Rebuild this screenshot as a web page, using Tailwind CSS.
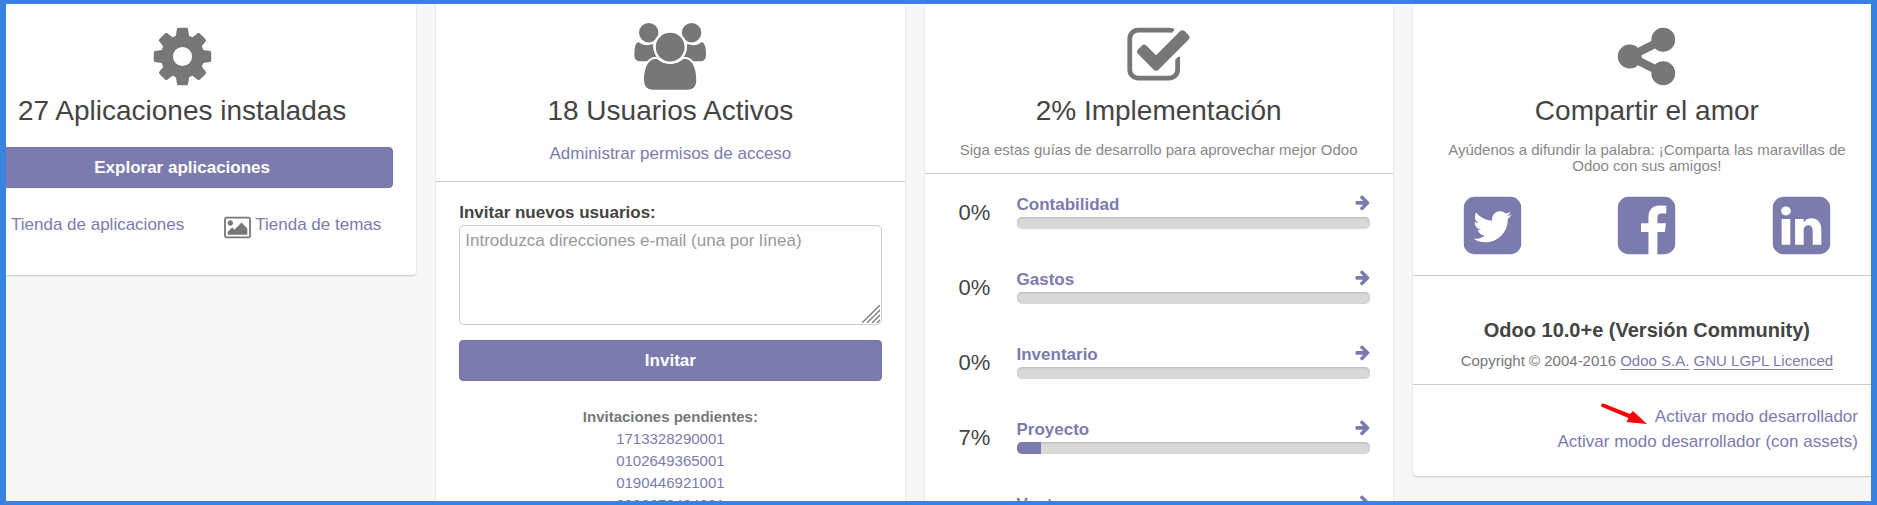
<!DOCTYPE html>
<html lang="es">
<head>
    <meta charset="UTF-8">
    <meta name="viewport" content="width=device-width, initial-scale=1.0">
    <title>Odoo - Configuración</title>
    <script src="https://cdn.jsdelivr.net/npm/@tailwindcss/browser@4"></script>
</head>
<body class="h-screen overflow-hidden border-x-6 border-y-4 border-[#3a82e0] bg-[#f7f7f7] font-['Liberation_Sans',Arial,sans-serif] text-[17px] text-[#444]">
    <main class="-ml-[58px] -mr-[10px] grid grid-cols-4 items-start gap-5">

        <!-- Apps -->
        <section class="rounded-b-sm bg-white px-[23px] pt-[19px] pb-[35px] text-center shadow-[0_1px_2px_rgba(0,0,0,0.2)]">
            <svg class="mx-auto size-[67px] fill-[#777]" viewBox="0 0 1792 1792"><path d="M1152 896q0-106-75-181t-181-75-181 75-75 181 75 181 181 75 181-75 75-181zm512-109v222q0 12-8 23t-20 13l-185 28q-19 54-39 91 35 50 107 138 10 12 10 25t-9 23q-27 37-99 108t-94 71q-12 0-26-9l-138-108q-44 23-91 38-16 136-29 186-7 28-36 28h-222q-14 0-24.5-8.5t-11.5-21.5l-28-184q-49-16-90-37l-141 107q-10 9-25 9-14 0-25-11-126-114-165-168-7-10-7-23 0-12 8-23 15-21 51-66.5t54-70.5q-27-50-41-99l-183-27q-13-2-21-12.5t-8-23.5v-222q0-12 8-23t19-13l186-28q14-46 39-92-40-57-107-138-10-12-10-24 0-10 9-23 26-36 98.5-107.5t94.5-71.5q13 0 26 10l138 107q44-23 91-38 16-136 29-186 7-28 36-28h222q14 0 24.5 8.5t11.5 21.5l28 184q49 16 90 37l142-107q9-9 24-9 13 0 25 10 129 119 165 170 7 8 7 22 0 12-8 23-15 21-51 66.5t-54 70.5q26 50 41 98l183 28q13 2 21 12.5t8 23.5z"/></svg>
            <h2 class="mt-[3px] text-[28px] leading-9">27 Aplicaciones instaladas</h2>
            <button class="mt-[18px] h-[41px] w-full rounded-sm border border-[#7574a8] bg-[#7c7bad] font-bold text-white">Explorar aplicaciones</button>
            <div class="mt-[25px] flex justify-between px-3 leading-6 text-[#7c7bad]">
                <a href="#" class="flex gap-1">
                    <svg class="mt-0.5 size-6 fill-[#777]" viewBox="0 0 24 24"><path d="M1 3h4l1 3h17l-2 9H8l.5 2H21v2H7L3.800 5H1z"/><circle cx="9" cy="21" r="2"/><circle cx="19" cy="21" r="2"/></svg>
                    Tienda de aplicaciones
                </a>
                <a href="#" class="flex gap-1">
                    <svg class="mt-0.5 h-[25px] w-[27px] fill-[#777]" viewBox="-64 0 1920 1792"><path d="M576 576q0 80-56 136t-136 56-136-56-56-136 56-136 136-56 136 56 56 136zm1024 384v448h-1408v-192l320-320 160 160 512-512zm96-704h-1600q-13 0-22.500 9.500t-9.500 22.500v1216q0 13 9.500 22.500t22.500 9.500h1600q13 0 22.500-9.500t9.500-22.500v-1216q0-13-9.500-22.500t-22.500-9.500zm160 32v1216q0 66-47 113t-113 47h-1600q-66 0-113-47t-47-113v-1216q0-66 47-113t113-47h1600q66 0 113 47t47 113z"/></svg>
                    Tienda de temas
                </a>
            </div>
        </section>

        <!-- Users -->
        <section class="rounded-b-sm bg-white pb-8 text-center shadow-[0_1px_2px_rgba(0,0,0,0.2)]">
            <div class="border-b border-[#ccc] px-[23px] pt-[19px] pb-[15px]">
                <svg class="mx-auto h-[67px] w-[72px] fill-[#777] stroke-white" viewBox="73 40 215 200">
                    <g stroke="none">
                        <path d="M86 97Q103 112 130 103Q133 142 150 145L132 154H92Q74 154 74 136Q74 100 86 97zM276 97Q259 112 232 103Q229 142 212 145L230 154H270Q288 154 288 136Q288 100 276 97z"/>
                        <circle cx="117" cy="69" r="29"/>
                        <circle cx="245" cy="69" r="29"/>
                    </g>
                    <path stroke-width="12" paint-order="stroke" d="M140 147Q181 178 222 147C250 147 259 180 259 212Q259 239 234 239H128Q103 239 103 212C103 180 112 147 140 147z"/>
                    <circle cx="181" cy="112" r="43" stroke-width="14" paint-order="stroke"/>
                </svg>
                <h2 class="mt-[3px] text-[28px] leading-9">18 Usuarios Activos</h2>
                <a href="#" class="mt-[13px] block leading-6 text-[#7c7bad]">Administrar permisos de acceso</a>
            </div>
            <form class="px-[23px] pt-[19px]">
                <label for="emails" class="block text-left leading-6 font-bold">Invitar nuevos usuarios:</label>
                <div class="relative">
                    <textarea id="emails" placeholder="Introduzca direcciones e-mail (una por línea)" class="block h-[100px] w-full resize-none rounded-[5px] border border-[#ccc] px-[5px] py-1 leading-[22px] placeholder:text-[#999]"></textarea>
                    <svg class="absolute right-0.5 bottom-0.5 size-[18px] stroke-[#777]" viewBox="0 0 18 18" stroke-width="1.300"><path d="M0 18L18 0M5 18L18 5M10 18L18 10M15 18L18 15"/></svg>
                </div>
                <button type="button" class="mt-[15px] h-[41px] w-full rounded-sm border border-[#7574a8] bg-[#7c7bad] font-bold text-white">Invitar</button>
            </form>
            <div class="mt-[25px] flex flex-col items-center text-[15px] leading-[22px] text-[#7c7bad]">
                <strong class="text-[#777]">Invitaciones pendientes:</strong>
                <a href="#">1713328290001</a>
                <a href="#">0102649365001</a>
                <a href="#">0190446921001</a>
                <a href="#">0992679494001</a>
            </div>
        </section>

        <!-- Implementation planner -->
        <section class="rounded-b-sm bg-white pb-8 shadow-[0_1px_2px_rgba(0,0,0,0.2)]">
            <div class="border-b border-[#ccc] px-[23px] pt-[19px] pb-[15px] text-center">
                <svg class="mx-auto size-[67px] fill-[#777]" viewBox="0 0 1792 1792"><path d="M1472 930v318q0 119-84.500 203.500t-203.500 84.500h-832q-119 0-203.500-84.500t-84.500-203.500v-832q0-119 84.500-203.500t203.500-84.500h832q63 0 117 25 15 7 18 23 3 17-9 29l-49 49q-10 10-23 10-3 0-9-2-23-6-45-6h-832q-66 0-113 47t-47 113v832q0 66 47 113t113 47h832q66 0 113-47t47-113v-254q0-13 9-22l64-64q10-10 23-10 6 0 12 3 20 8 20 29zm231-489l-814 814q-24 24-57 24t-57-24l-430-430q-24-24-24-57t24-57l110-110q24-24 57-24t57 24l263 263 647-647q24-24 57-24t57 24l110 110q24 24 24 57t-24 57z"/></svg>
                <h2 class="mt-[3px] text-[28px] leading-9">2% Implementación</h2>
                <p class="mt-[13px] text-[15px] leading-4 text-[#888]">Siga estas guías de desarrollo para aprovechar mejor Odoo</p>
            </div>
            <ul id="planner" class="space-y-[39px] pt-[21px] pr-[23px] pl-[34px]"></ul>
        </section>

        <!-- Share and about -->
        <section class="rounded-b-sm bg-white shadow-[0_1px_2px_rgba(0,0,0,0.2)]">
            <div class="border-b border-[#ccc] pt-[19px] pb-4 text-center">
                <svg class="mx-auto size-[67px] fill-[#777]" viewBox="0 0 1792 1792"><path d="M1344 1024q133 0 226.500 93.500t93.500 226.500-93.500 226.500-226.500 93.500-226.500-93.500-93.500-226.500q0-12 2-34l-360-180q-92 86-218 86-133 0-226.500-93.500t-93.500-226.500 93.500-226.500 226.500-93.500q126 0 218 86l360-180q-2-22-2-34 0-133 93.500-226.500t226.500-93.500 226.500 93.500 93.500 226.500-93.500 226.500-226.500 93.500q-126 0-218-86l-360 180q2 22 2 34t-2 34l360 180q92-86 218-86z"/></svg>
                <h2 class="mt-[3px] text-[28px] leading-9">Compartir el amor</h2>
                <p class="mt-[13px] px-8 text-[15px] leading-4 text-[#888]">Ayúdenos a difundir la palabra: ¡Comparta las maravillas de Odoo con sus amigos!</p>
                <div class="mt-[18px] grid grid-cols-3 justify-items-center px-0.5">
                    <a href="#" aria-label="Twitter"><svg class="size-[67px] fill-[#7c7bad]" viewBox="0 0 1792 1792"><path d="M1408 610q-56 25-121 34 68-40 93-117-65 38-134 51-61-66-153-66-87 0-148.500 61.500t-61.500 148.500q0 29 5 48-129-7-242-65t-192-155q-29 50-29 106 0 114 91 175-47-1-100-26v2q0 75 50 133.500t123 72.500q-29 8-51 8-13 0-39-4 21 63 74.500 104t121.500 42q-116 90-261 90-26 0-50-3 148 94 322 94 112 0 210-35.500t168-95 120.500-137 75-162 24.500-168.500q0-18-1-27 63-45 105-109zm256-194v960q0 119-84.500 203.500t-203.500 84.500h-960q-119 0-203.500-84.500t-84.500-203.500v-960q0-119 84.500-203.500t203.500-84.500h960q119 0 203.500 84.500t84.500 203.500z"/></svg></a>
                    <a href="#" aria-label="Facebook"><svg class="size-[67px] fill-[#7c7bad]" viewBox="0 0 1792 1792"><path d="M1376 128q119 0 203.500 84.500t84.500 203.500v960q0 119-84.500 203.500t-203.500 84.500h-188v-595h199l30-232h-229v-148q0-56 23.500-84t91.500-28l122-1v-207q-63-9-178-9-136 0-217.500 80t-81.500 226v171h-200v232h200v595h-532q-119 0-203.500-84.500t-84.500-203.500v-960q0-119 84.500-203.500t203.500-84.500h960z"/></svg></a>
                    <a href="#" aria-label="LinkedIn"><svg class="size-[67px] fill-[#7c7bad]" viewBox="0 0 1792 1792"><path d="M365 1414h231v-694h-231v694zm246-908q-1-52-36-86t-93-34-94.500 34-36.500 86q0 51 35.500 85.500t92.500 34.500h1q59 0 95-34.500t36-85.500zm585 908h231v-398q0-154-73-233t-193-79q-136 0-209 117h2v-101h-231q3 66 0 694h231v-388q0-38 7-56 15-35 45-59.500t74-24.500q116 0 116 157v371zm468-998v960q0 119-84.500 203.500t-203.500 84.500h-960q-119 0-203.500-84.500t-84.500-203.500v-960q0-119 84.500-203.500t203.500-84.500h960q119 0 203.500 84.500t84.500 203.500z"/></svg></a>
                </div>
            </div>
            <div class="border-b border-[#ccc] pt-10 pb-[13px] text-center">
                <h3 class="text-[20px] leading-7 font-bold">Odoo 10.0+e (Versión Community)</h3>
                <p class="mt-[7px] text-[15px] leading-5 text-[#777]">Copyright © 2004-2016 <a href="#" class="text-[#7c7bad] underline underline-offset-3">Odoo S.A.</a> <a href="#" class="text-[#7c7bad] underline underline-offset-3">GNU LGPL Licenced</a></p>
            </div>
            <div class="flex flex-col items-end pt-[19px] pr-[23px] pb-[22px] leading-[25px] text-[#7c7bad]">
                <a href="#" class="relative">
                    <svg class="absolute right-full bottom-1 mr-2 h-[22px] w-[47px] fill-[red]" viewBox="0 0 47 22"><path d="M3.500 0.500L30 11L33 8L47 21L26.500 19L28.500 15L1.500 3.800Q0 0.500 3.500 0.500z"/></svg>
                    Activar modo desarrollador
                </a>
                <a href="#">Activar modo desarrollador (con assets)</a>
            </div>
        </section>
    </main>

    <script>
        const planners = [
            { name: 'Contabilidad', progress: 0 },
            { name: 'Gastos', progress: 0 },
            { name: 'Inventario', progress: 0 },
            { name: 'Proyecto', progress: 7 },
            { name: 'Ventas', progress: 0 }
        ];

        document.getElementById('planner').innerHTML = planners.map(p => `
            <li class="flex">
                <span class="w-[58px] shrink-0 text-[22px] leading-9">${p.progress}%</span>
                <div class="grow">
                    <a href="#" class="flex justify-between leading-5 font-bold text-[#7c7bad]">
                        ${p.name}
                        <svg class="size-[17px] fill-[#7c7bad]" viewBox="-128 128 1792 1792"><path d="M1600 960q0 54-37 91l-651 651q-39 37-91 37-51 0-90-37l-75-75q-38-38-38-91t38-91l293-293h-704q-52 0-84.500-37.500t-32.500-90.500v-128q0-53 32.500-90.500t84.500-37.500h704l-293-294q-38-36-38-90t38-90l75-75q38-38 90-38 53 0 91 38l651 651q37 35 37 90z"/></svg>
                    </a>
                    <div role="progressbar" aria-label="${p.name}" aria-valuenow="${p.progress}" class="mt-0.5 h-3 overflow-hidden rounded-[5px] bg-[#d8d8d8] shadow-[inset_0_1px_2px_rgba(0,0,0,0.15)]">
                        <div class="h-full bg-[#7c7bad]" style="width: ${p.progress}%"></div>
                    </div>
                </div>
            </li>
        `).join('');
    </script>
</body>
</html>
